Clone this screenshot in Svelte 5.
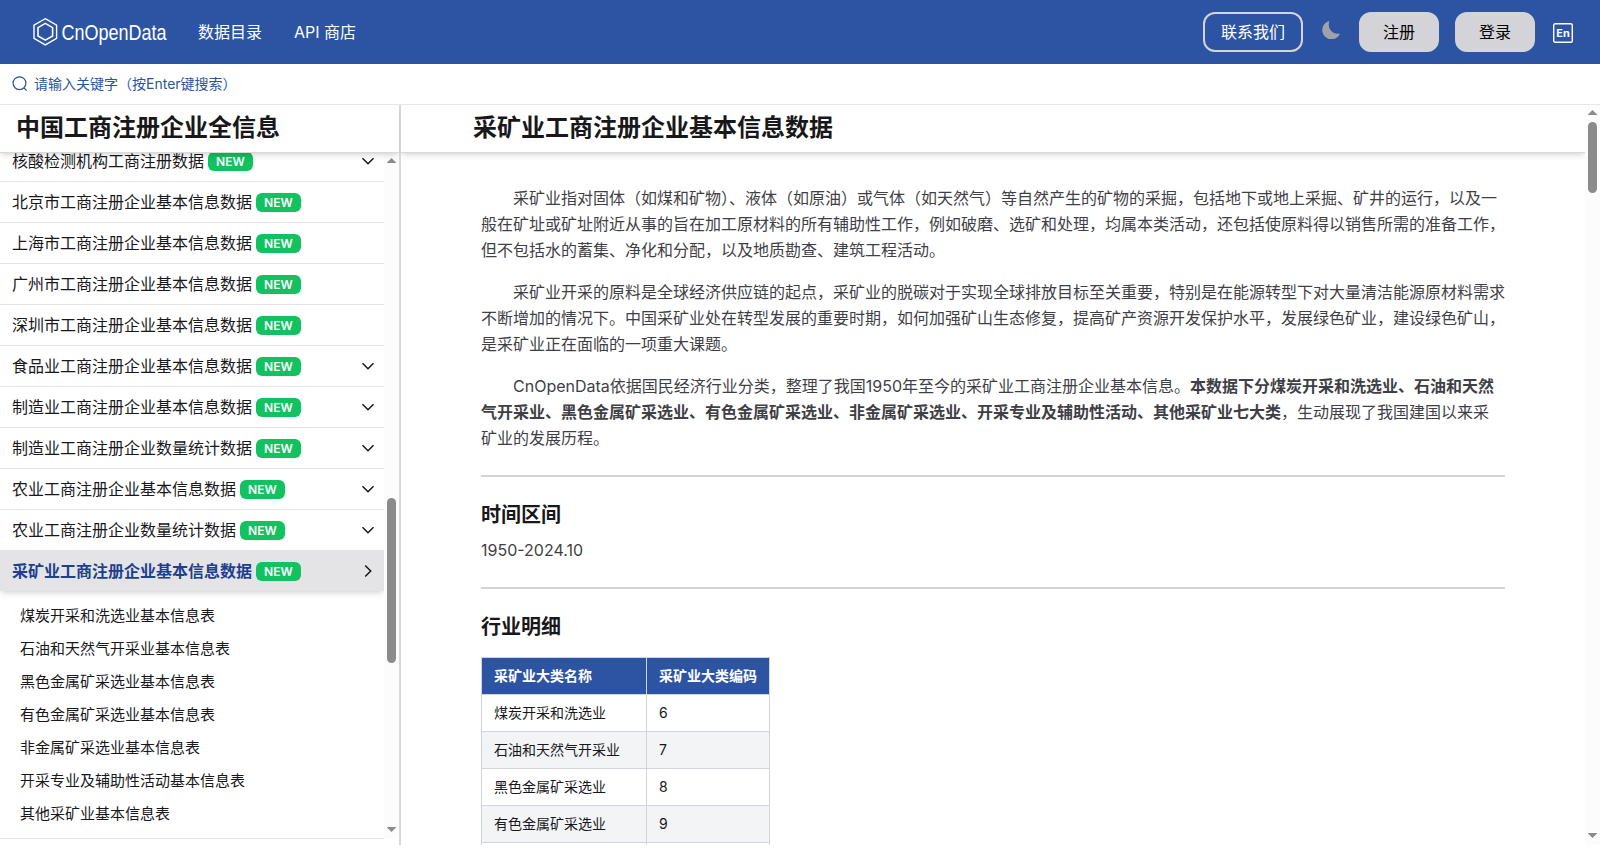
<script>
  const menu = [
    { title: "核酸检测机构工商注册数据", sub: true },
    { title: "北京市工商注册企业基本信息数据" },
    { title: "上海市工商注册企业基本信息数据" },
    { title: "广州市工商注册企业基本信息数据" },
    { title: "深圳市工商注册企业基本信息数据" },
    { title: "食品业工商注册企业基本信息数据", sub: true },
    { title: "制造业工商注册企业基本信息数据", sub: true },
    { title: "制造业工商注册企业数量统计数据", sub: true },
    { title: "农业工商注册企业基本信息数据", sub: true },
    { title: "农业工商注册企业数量统计数据", sub: true },
    { title: "采矿业工商注册企业基本信息数据", sub: true }
  ];

  const tables = [
    "煤炭开采和洗选业基本信息表",
    "石油和天然气开采业基本信息表",
    "黑色金属矿采选业基本信息表",
    "有色金属矿采选业基本信息表",
    "非金属矿采选业基本信息表",
    "开采专业及辅助性活动基本信息表",
    "其他采矿业基本信息表"
  ];

  const industries = [
    ["煤炭开采和洗选业", 6],
    ["石油和天然气开采业", 7],
    ["黑色金属矿采选业", 8],
    ["有色金属矿采选业", 9],
    ["非金属矿采选业", 10]
  ];

  let active = $state(10);
</script>

<div class="page">
  <header>
    <a class="logo" href="#home" aria-label="CnOpenData">
      <svg width="136" height="30" viewBox="0 0 136 30" fill="none" stroke="#fff">
        <path d="M13.3 1.7 24.6 8.2v13.1L13.3 27.9 2 21.3V8.2z" stroke-width="1.4" />
        <path d="M13.3 6.4 20.6 10.6v8.4l-7.3 4.2L6 19v-8.4z" stroke-width="1.6" />
        <text x="29.5" y="22.5" textLength="105" lengthAdjust="spacingAndGlyphs" fill="#fff" stroke="none">CnOpenData</text>
      </svg>
    </a>
    <nav>
      <a href="#catalog">数据目录</a>
      <a href="#api">API 商店</a>
    </nav>
    <div class="actions">
      <button class="btn outline">联系我们</button>
      <svg class="moon" width="18" height="18" viewBox="0 0 18 18" fill="#a1a1aa">
        <path d="M7.6 0A9.2 9.2 0 1 0 18 12.4 9 9 0 0 1 7.6 0z" />
      </svg>
      <button class="btn">注册</button>
      <button class="btn">登录</button>
      <svg class="lang" width="20" height="20" viewBox="0 0 20 20" fill="none">
        <rect x="0.7" y="0.7" width="18.6" height="18.6" rx="1.5" stroke="#fff" stroke-width="1.4" />
        <text x="3.3" y="14.2" textLength="13.4" lengthAdjust="spacingAndGlyphs" fill="#fff">En</text>
      </svg>
    </div>
  </header>

  <div class="search">
    <svg width="16" height="16" viewBox="0 0 16 16" fill="none" stroke="#2c54a3" stroke-width="1.2">
      <circle cx="7.5" cy="7.2" r="6.4" />
      <path d="m12 12 2.8 2.6" />
    </svg>
    <span>请输入关键字（按Enter键搜索）</span>
  </div>

  <div class="body">
    <aside>
      <h1 class="bar">中国工商注册企业全信息</h1>
      <div class="scroller">
        <div class="list">
          <div class="inner">
            {#each menu as item, i}
              <button class="item" class:active={active === i} onclick={() => (active = i)}>
                <span class="name">{item.title}</span>
                <span class="badge">NEW</span>
                {#if item.sub}
                  <svg class="arrow" class:right={active === i} width="16" height="16" viewBox="0 0 16 16" fill="none" stroke="#18181b" stroke-width="1.5">
                    <path d="m2.5 5.2 5.5 5.5 5.5-5.5" />
                  </svg>
                {/if}
              </button>
            {/each}
            <ul>
              {#each tables as name}
                <li>{name}</li>
              {/each}
            </ul>
          </div>
        </div>
        <div class="track">
          <i class="up"></i>
          <div class="thumb side"></div>
          <i class="down"></i>
        </div>
      </div>
    </aside>

    <main>
      <div class="doc">
        <h1 class="bar title">采矿业工商注册企业基本信息数据</h1>
        <article>
          <p class="indent">采矿业指对固体（如煤和矿物）、液体（如原油）或气体（如天然气）等自然产生的矿物的采掘，包括地下或地上采掘、矿井的运行，以及一般在矿址或矿址附近从事的旨在加工原材料的所有辅助性工作，例如破磨、选矿和处理，均属本类活动，还包括使原料得以销售所需的准备工作，但不包括水的蓄集、净化和分配，以及地质勘查、建筑工程活动。</p>
          <p class="indent">采矿业开采的原料是全球经济供应链的起点，采矿业的脱碳对于实现全球排放目标至关重要，特别是在能源转型下对大量清洁能源原材料需求不断增加的情况下。中国采矿业处在转型发展的重要时期，如何加强矿山生态修复，提高矿产资源开发保护水平，发展绿色矿业，建设绿色矿山，是采矿业正在面临的一项重大课题。</p>
          <p class="indent">CnOpenData依据国民经济行业分类，整理了我国1950年至今的采矿业工商注册企业基本信息。<strong>本数据下分煤炭开采和洗选业、石油和天然气开采业、黑色金属矿采选业、有色金属矿采选业、非金属矿采选业、开采专业及辅助性活动、其他采矿业七大类</strong>，生动展现了我国建国以来采矿业的发展历程。</p>
          <hr />
          <h2>时间区间</h2>
          <p class="range">1950-2024.10</p>
          <hr />
          <h2>行业明细</h2>
          <table>
            <thead>
              <tr><th>采矿业大类名称</th><th>采矿业大类编码</th></tr>
            </thead>
            <tbody>
              {#each industries as [name, code]}
                <tr><td>{name}</td><td>{code}</td></tr>
              {/each}
            </tbody>
          </table>
        </article>
      </div>
      <div class="track">
        <i class="up"></i>
        <div class="thumb"></div>
        <i class="down"></i>
      </div>
    </main>
  </div>
</div>

<style>
:global(body) {
  background: #fff;
  overflow: hidden;
}

.page {
  font-family: Inter, "Noto Sans CJK SC", sans-serif;
  font-size: 16px;
  line-height: 24px;
  color: #18181b;
  height: 861px;
}

.page * {
  box-sizing: border-box;
}

h1, h2, p, ul, hr {
  margin: 0;
  padding: 0;
}

a {
  color: inherit;
  text-decoration: none;
}

button {
  font: inherit;
  cursor: pointer;
}

header {
  display: flex;
  align-items: center;
  height: 64px;
  padding: 0 27px 0 32px;
  background: #2c54a3;
  color: #fff;
}

.logo {
  display: flex;
}

.logo text {
  font-family: "Liberation Sans", Arial, sans-serif;
  font-size: 22.5px;
}

nav {
  display: flex;
  gap: 32px;
  margin-left: 30px;
}

.actions {
  display: flex;
  align-items: center;
  margin-left: auto;
}

.btn {
  width: 80px;
  height: 40px;
  margin-right: 16px;
  padding: 0;
  border: 2px solid #d4d4d8;
  border-radius: 12px;
  background: #d4d4d8;
  color: #000;
}

.btn.outline {
  width: 100px;
  background: none;
  color: #fff;
}

.moon {
  margin: 0 19px 4px 3px;
}

.lang {
  margin: 1px 0 0 2px;
}

.lang text {
  font-size: 11px;
  font-weight: 700;
}

.search {
  display: flex;
  align-items: center;
  gap: 6px;
  height: 40px;
  padding-left: 12px;
  color: #2c54a3;
  font-size: 14px;
}

.body {
  display: flex;
  height: 741px;
  border-top: 1px solid #e8e8ea;
}

aside {
  display: flex;
  flex-direction: column;
  width: 401px;
  border-right: 2px solid #d9d9dc;
}

.bar {
  position: relative;
  flex: none;
  height: 48px;
  padding-left: 16px;
  border-bottom: 1px solid #d9d9dc;
  background: #fff;
  box-shadow: 0 4px 6px -1px rgba(0, 0, 0, 0.1), 0 2px 4px -2px rgba(0, 0, 0, 0.1);
  font-size: 24px;
  font-weight: 600;
  line-height: 45px;
}

.bar.title {
  padding-left: 72px;
}

.scroller {
  display: flex;
  height: 686px;
}

.list {
  flex: 1;
  overflow: hidden;
}

.inner {
  margin-top: -13px;
  border-bottom: 1px solid #e4e4e7;
}

.item {
  display: flex;
  align-items: center;
  width: 100%;
  height: 41px;
  padding: 0 8px 0 12px;
  border: 0;
  border-top: 1px solid #e4e4e7;
  background: none;
  color: #18181b;
}

.item.active {
  background: #e4e4e7;
  box-shadow: 0 4px 6px -1px rgba(0, 0, 0, 0.1), 0 2px 4px -2px rgba(0, 0, 0, 0.1);
}

.item.active .name {
  color: #1e3f8f;
  font-weight: 700;
}

.badge {
  height: 19px;
  margin-left: 4px;
  padding: 0 8px;
  border-radius: 6px;
  background: #12c15f;
  color: #fff;
  font-size: 12px;
  font-weight: 600;
  line-height: 19px;
}

.arrow {
  margin-left: auto;
}

.arrow.right {
  transform: rotate(-90deg);
}

ul {
  padding: 8px 20px;
  list-style: none;
}

li {
  height: 33px;
  font-size: 15px;
  line-height: 33px;
}

.track {
  display: flex;
  flex-direction: column;
  align-items: center;
  width: 15px;
  padding: 5px 0 7px;
  background: #fcfcfc;
}

.up, .down {
  width: 10px;
  height: 5px;
  background: #8b8b8b;
}

.up {
  clip-path: polygon(50% 0, 100% 100%, 0 100%);
}

.down {
  margin-top: auto;
  clip-path: polygon(0 0, 100% 0, 50% 100%);
}

.thumb {
  width: 9px;
  height: 71px;
  margin-top: 7px;
  border-radius: 5px;
  background: #8b8b8b;
}

.thumb.side {
  height: 165px;
  margin-top: 335px;
}

main {
  display: flex;
  flex: 1;
  height: 740px;
}

.doc {
  flex: 1;
  overflow: hidden;
}

article {
  width: 1024px;
  margin: 32px auto 0;
  color: #3f3f46;
  line-height: 26px;
}

p + p {
  margin-top: 16px;
}

.indent {
  text-indent: 2em;
}

hr {
  height: 2px;
  margin: 24px 0;
  border: 0;
  background: #d4d4d8;
}

h2 {
  color: #18181b;
  font-size: 20px;
  font-weight: 600;
  line-height: 28px;
}

.range {
  margin-top: 8px;
}

table {
  margin-top: 16px;
  border-collapse: collapse;
  color: #18181b;
  font-size: 14px;
  line-height: 20px;
}

th, td {
  height: 37px;
  padding: 0 12px;
  border: 1px solid #d1d5db;
  text-align: left;
}

th:first-child {
  width: 165px;
}

th {
  background: #2c54a3;
  color: #fff;
  font-weight: 600;
}

tbody tr:nth-child(even) {
  background: #f3f4f6;
}
</style>
